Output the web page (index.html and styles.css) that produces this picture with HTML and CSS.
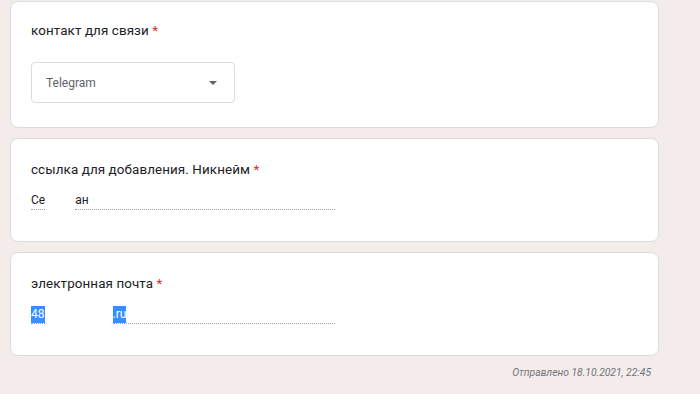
FILE: index.html
```html
<!DOCTYPE html>
<html lang="ru">
<head>
    <meta charset="UTF-8">
    <meta name="viewport" content="width=device-width, initial-scale=1.0">
    <title>Ответ</title>
    <link rel="stylesheet" href="styles.css">
</head>
<body>
    <div class="form">
        <div class="card card-first">
            <div class="q-title">контакт для связи <span class="req">*</span></div>
            <div class="select">
                <span class="select-value">Telegram</span>
                <span class="select-arrow"></span>
            </div>
        </div>

        <div class="card">
            <div class="q-title">ссылка для добавления. Никнейм <span class="req">*</span></div>
            <div class="answer">
                <span class="seg">Се</span>
                <span class="hidden-part gap-nick"></span>
                <span class="seg seg-rest">ан</span>
            </div>
        </div>

        <div class="card">
            <div class="q-title">электронная почта <span class="req">*</span></div>
            <div class="answer">
                <span class="seg"><span class="sel">48</span></span>
                <span class="hidden-part gap-mail"></span>
                <span class="seg seg-rest"><span class="sel">.ru</span></span>
            </div>
        </div>

        <div class="sent">Отправлено 18.10.2021, 22:45</div>
    </div>
</body>
</html>
```

FILE: styles.css
```css
body {
    margin: 0;
    background-color: #f4ecea;
    font-family: Roboto, 'Liberation Sans', sans-serif;
    color: #202124;
}
.form {
    width: 649px;
    margin-left: 10px;
    padding-top: 1px;
}
.card {
    background: white;
    border: 1px solid #dadce0;
    border-radius: 8px;
    padding: 21px 20px 29px;
    margin-bottom: 10px;
    box-sizing: border-box;
    height: 104px;
}
.card-first {
    height: 127px;
    padding-top: 19px;
    padding-bottom: 23px;
}
.card-first .select {
    margin-top: 21px;
}
.q-title {
    font-size: 13.4px;
    line-height: 20px;
    letter-spacing: 0.1px;
}
.req {
    color: #d93025;
}
.select {
    width: 204px;
    height: 41px;
    box-sizing: border-box;
    border: 1px solid #dadce0;
    border-radius: 4px;
    display: flex;
    align-items: center;
    justify-content: space-between;
    padding: 0 17px 0 14px;
}
.select-value {
    font-size: 12px;
    color: #5f6368;
}
.select-arrow {
    width: 0;
    height: 0;
    border-left: 4px solid transparent;
    border-right: 4px solid transparent;
    border-top: 4px solid #5f6368;
    margin-top: 1px;
}
.answer {
    display: flex;
    margin-top: 12px;
    font-size: 12px;
    line-height: 17px;
    width: 304px;
}
.seg {
    border-bottom: 1px dotted #a0a0a0;
    color: #202124;
}
.seg-rest {
    flex: 1;
}
.gap-nick {
    width: 30px;
}
.gap-mail {
    width: 68px;
}
.sel {
    background: #3390ff;
    color: white;
    display: inline-block;
}
.sent {
    text-align: right;
    padding-right: 8px;
    margin-top: 6px;
    font-size: 10.3px;
    font-style: italic;
    color: #70757a;
}
```
